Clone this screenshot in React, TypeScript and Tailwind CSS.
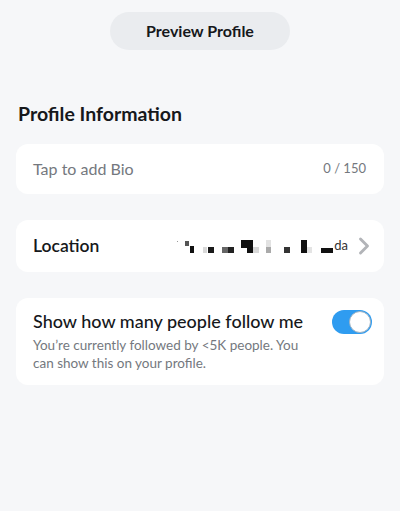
import { ChevronRight } from "lucide-react";

const blocks: [number, number, number, number, string][] = [
  [0, 4, 1, 1, "#9a9a9a"],
  [8, 4, 4, 5, "#555"],
  [13, 9, 4, 7, "#111"],
  [26, 10, 4, 6, "#d8d8d8"],
  [31, 10, 6, 6, "#1a1a1a"],
  [45, 10, 6, 6, "#666"],
  [51, 10, 6, 6, "#222"],
  [64, 3, 12, 8, "#111"],
  [70, 11, 6, 5, "#111"],
  [76, 10, 6, 6, "#d8d8d8"],
  [89, 3, 5, 7, "#e2e2e2"],
  [89, 10, 5, 6, "#aaa"],
  [107, 10, 6, 6, "#333"],
  [124, 3, 6, 13, "#111"],
  [130, 10, 5, 6, "#e4e4e4"],
  [144, 11, 12, 5, "#111"],
];

const Pixelated = () => (
  <svg width="157" height="18" viewBox="0 0 157 18" className="shrink-0">
    {blocks.map(([x, y, w, h, c], i) => (
      <rect key={i} x={x} y={y} width={w} height={h} fill={c} />
    ))}
  </svg>
);

export default function App() {
  return (
    <div
      className="min-h-[511px] w-full bg-[#f6f7f9] px-4 pt-3 text-[#16181b]"
      style={{ fontFamily: "Lato, 'Noto Sans', sans-serif" }}
    >
      <div className="flex justify-center">
        <button className="h-[38px] w-[180px] rounded-full bg-[#eaecef] text-[16px] font-bold">
          Preview Profile
        </button>
      </div>

      <h2 className="mt-[52px] pl-[2px] text-[19.5px] font-bold leading-6">
        Profile Information
      </h2>

      <div className="mt-[18px] flex h-[50px] items-center justify-between rounded-xl bg-white pl-[17px] pr-[18px]">
        <span className="text-[16px] text-[#74787e]">Tap to add Bio</span>
        <span className="text-[13px] text-[#74787e]">0 / 150</span>
      </div>

      <div className="mt-[26px] flex h-[52px] items-center justify-between rounded-xl bg-white pl-[17px] pr-[6px]">
        <span className="text-[17.5px] font-semibold">Location</span>
        <div className="flex items-center">
          <Pixelated />
          <span className="text-[13px] text-[#333]">da</span>
          <ChevronRight className="ml-[2px] h-7 w-7 text-[#b2b4b8]" strokeWidth={2.5} />
        </div>
      </div>

      <div className="mt-[26px] rounded-xl bg-white pb-[13px] pl-[17px] pr-[12px] pt-[10px]">
        <div className="flex items-center justify-between">
          <span className="text-[18px] font-medium">
            Show how many people follow me
          </span>
          <div className="flex h-[24px] w-[40px] items-center justify-end rounded-full bg-[#2f9cf0] pr-[1px]">
            <div className="h-[22px] w-[22px] rounded-full border border-[#9fb3c4] bg-white" />
          </div>
        </div>
        <p className="mt-[1px] w-[275px] text-[13.5px] leading-[18px] text-[#74787e]">
          You’re currently followed by &lt;5K people. You can show this on your
          profile.
        </p>
      </div>
    </div>
  );
}
